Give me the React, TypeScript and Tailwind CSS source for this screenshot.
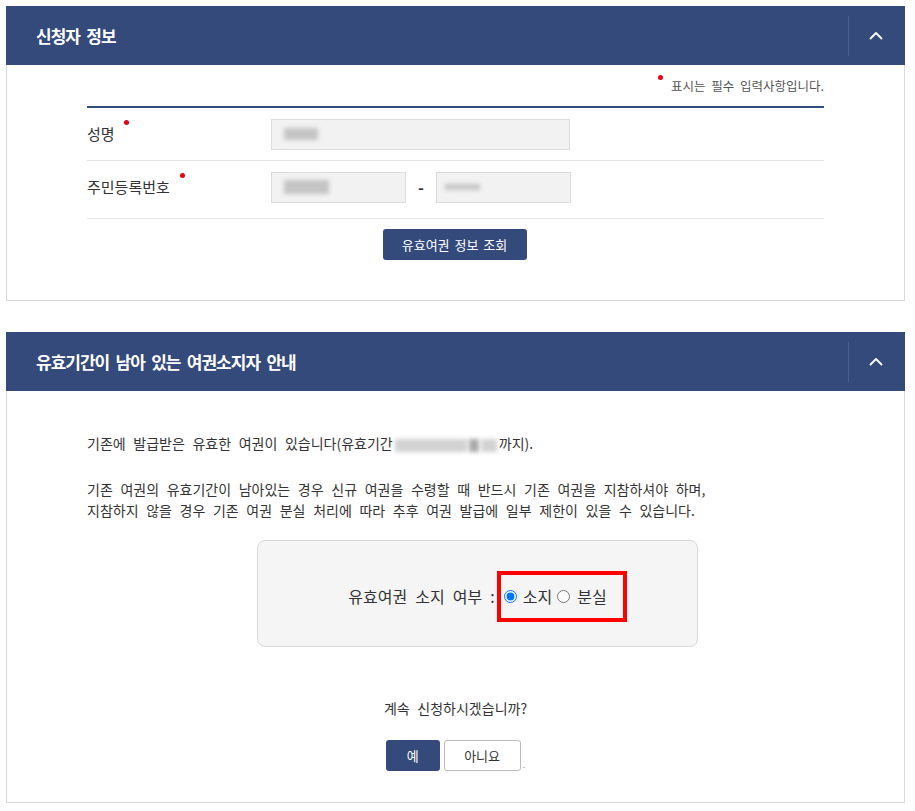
import React from "react";

const font = { fontFamily: '"Noto Sans CJK KR", "Noto Sans", sans-serif' };

function Chevron() {
  return (
    <svg width="14" height="9" viewBox="0 0 14 9" fill="none">
      <path d="M1.5 7.5 L7 2 L12.5 7.5" stroke="white" strokeWidth="1.8" strokeLinecap="round" strokeLinejoin="round" />
    </svg>
  );
}

function Header({ title }: { title: string }) {
  return (
    <div className="flex h-[59px] items-center bg-[#344a7a]">
      <div className="flex-1 pl-[30px] text-[17px] font-bold tracking-[-1px] text-white [word-spacing:3.5px]">{title}</div>
      <div className="flex h-[40px] w-[57px] items-center justify-center border-l border-[#4b5f8c] pr-[2px]">
        <Chevron />
      </div>
    </div>
  );
}

function Dot() {
  return <div className="h-[5px] w-[5px] rounded-full bg-[#e60012]" />;
}

function Blur({ w, h, className = "" }: { w: number; h: number; className?: string }) {
  return <span className={"inline-block blur-[2px] " + className} style={{ width: w, height: h }} />;
}

export default function App() {
  return (
    <div className="bg-white px-[6px] pt-[6px] text-[#333] [word-spacing:4.5px]" style={font}>
      {/* Panel 1 */}
      <div className="w-[899px]">
        <Header title="신청자 정보" />
        <div className="h-[236px] border border-t-0 border-[#d9d9d9] px-[80px]">
          <div className="flex justify-end pt-[10px]">
            <div className="flex items-start">
              <Dot />
              <span className="ml-[8px] mt-[1px] text-[12.5px] leading-[20px] text-[#555] [word-spacing:3px]">표시는 필수 입력사항입니다.</span>
            </div>
          </div>
          <div className="mt-[10px] border-t-2 border-[#344a7a]">
            <div className="flex h-[53px] items-center border-b border-[#e5e5e5]">
              <div className="relative w-[184px] text-[15px]">
                <span>성명</span>
                <div className="absolute left-[37px] top-[-3px]"><Dot /></div>
              </div>
              <div className="flex h-[31px] w-[299px] items-center border border-[#dcdcdc] bg-[#f2f2f2] pl-[12px]">
                <Blur w={34} h={12} className="bg-[#c4c4c4]" />
              </div>
            </div>
            <div className="flex h-[58px] items-center border-b border-[#e5e5e5] pb-[5px]">
              <div className="relative w-[184px] text-[15px]">
                <span>주민등록번호</span>
                <div className="absolute left-[93px] top-[-3px]"><Dot /></div>
              </div>
              <div className="flex h-[31px] w-[135px] items-center border border-[#dcdcdc] bg-[#f2f2f2] pl-[12px]">
                <Blur w={45} h={14} className="bg-[#c4c4c4]" />
              </div>
              <div className="w-[30px] text-center text-[16px] font-bold">-</div>
              <div className="flex h-[31px] w-[135px] items-center border border-[#dcdcdc] bg-[#f2f2f2] pl-[8px]">
                <Blur w={35} h={6} className="bg-[#c4c4c4]" />
              </div>
            </div>
          </div>
          <div className="flex justify-center pt-[10px] pr-[2px]">
            <button className="h-[31px] w-[144px] rounded-[3px] bg-[#344a7a] text-[13px] text-white [word-spacing:2px]">유효여권 정보 조회</button>
          </div>
        </div>
      </div>

      {/* Panel 2 */}
      <div className="mt-[31px] w-[899px]">
        <Header title="유효기간이 남아 있는 여권소지자 안내" />
        <div className="h-[412px] border border-t-0 border-[#d9d9d9] px-[80px] text-[14px]">
          <p className="pt-[42px] leading-[20px]">
            기존에 발급받은 유효한 여권이 있습니다(유효기간
            <span className="inline-flex items-center gap-[2px] px-[2px] align-middle [word-spacing:0]">
              <Blur w={72} h={13} className="bg-[#d2d2d2]" />
              <Blur w={10} h={13} className="bg-[#a8a8a8]" />
              <Blur w={16} h={13} className="bg-[#d2d2d2]" />
            </span>
            까지).
          </p>
          <p className="mt-[26px] leading-[21px]">
            기존 여권의 유효기간이 남아있는 경우 신규 여권을 수령할 때 반드시 기존 여권을 지참하셔야 하며,
            <br />
            지참하지 않을 경우 기존 여권 분실 처리에 따라 추후 여권 발급에 일부 제한이 있을 수 있습니다.
          </p>
          <div className="ml-[170px] mt-[19px] flex h-[107px] w-[441px] items-center justify-center rounded-[8px] border border-[#d9d9d9] bg-[#f5f5f5] pl-[20px] pt-[5px] text-[16px]">
            <span className="mr-[2px]">유효여권 소지 여부 :</span>
            <div className="flex h-[51px] w-[130px] items-center border-4 border-[#ff0000] pl-[3px]">
              <input type="radio" name="own" defaultChecked className="m-0 h-[13px] w-[13px] accent-[#0075ff]" />
              <span className="ml-[6px]">소지</span>
              <input type="radio" name="own" className="m-0 ml-[5px] h-[13px] w-[13px]" />
              <span className="ml-[7px]">분실</span>
            </div>
          </div>
          <p className="mt-[51px] text-center leading-[20px]">계속 신청하시겠습니까?</p>
          <div className="mt-[22px] flex items-center justify-center">
            <button className="h-[31px] w-[54px] rounded-[3px] bg-[#344a7a] text-[13px] text-white">예</button>
            <button className="ml-[4px] h-[31px] w-[77px] rounded-[3px] border border-[#bbb] bg-white text-[13px] text-[#333]">아니요</button>
            <span className="ml-[2px] self-end text-[10px] text-[#999]">.</span>
          </div>
        </div>
      </div>
    </div>
  );
}
